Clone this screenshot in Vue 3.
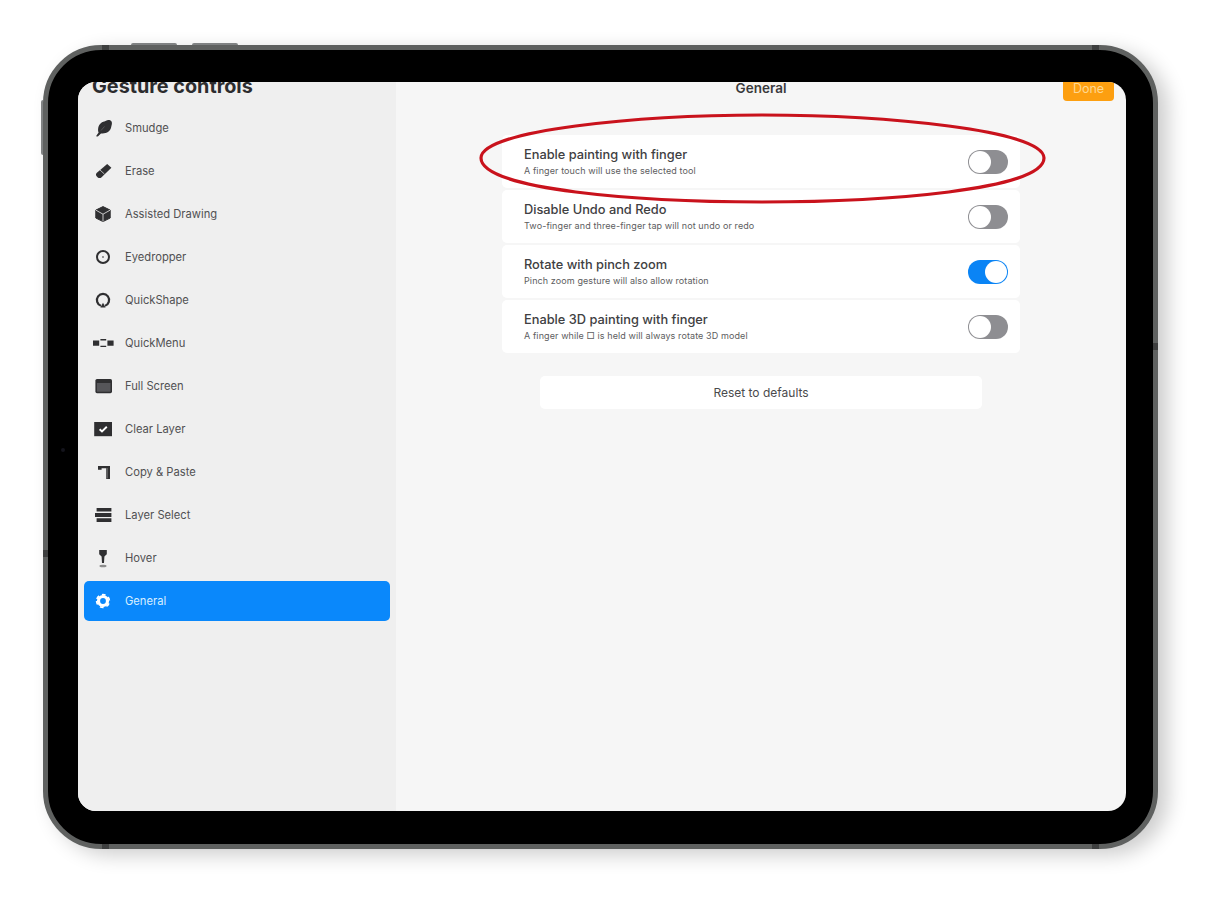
<script setup>
const ink = '#2f2f31'
const ring = (r) => `M${12 - r} 12a${r} ${r} 0 1 0 ${2 * r} 0a${r} ${r} 0 1 0 ${-2 * r} 0Z`

const menu = [
  { label: 'Smudge', shapes: [
    { d: 'M5 20.3 7.6 16.6C6.6 14 7 9.5 9.8 7.2 11.5 5.6 13 6 14.5 5 16.5 3.7 19 3.6 20.4 5.2 21.4 6.8 20.8 8.5 20.4 10 20 12 19.6 14 17.6 15.6 15 17.6 12 17.6 10 17.4L6.8 20.5Z', fill: ink },
    { d: 'M10 14.5 13.5 10.5', stroke: '#6c6c6e', 'stroke-width': 0.6, fill: 'none' }
  ] },
  { label: 'Erase', shapes: [
    { d: 'M16.2 5 20.4 8.7 10.6 18.2C9.4 19.3 7.9 19.4 6.8 18.4L5.6 17.2C4.6 16.1 4.8 14.8 5.9 13.8Z', fill: ink },
    { d: 'M9 11 13.4 15', stroke: '#efefef', 'stroke-width': 0.7, fill: 'none' }
  ] },
  { label: 'Assisted Drawing', shapes: [
    { d: 'M12 4.6 19.2 8.1V16L12 19.6 4.8 16V8.1Z', fill: ink, stroke: ink, 'stroke-linejoin': 'round' },
    { d: 'M12 12.2V19.6M12 12.2 4.8 8.1M12 12.2 19.2 8.1', stroke: '#efefef', 'stroke-width': 0.8, fill: 'none' }
  ] },
  { label: 'Eyedropper', shapes: [
    { d: ring(6), fill: 'none', stroke: ink, 'stroke-width': 2 },
    { d: ring(0.9), fill: '#6a6a6c' }
  ] },
  { label: 'QuickShape', shapes: [
    { d: 'M10 17.8A6.1 6.1 0 1 1 14 17.8', fill: 'none', stroke: ink, 'stroke-width': 2.2 },
    { d: 'M9.4 19.4 12 14.8 14.6 19.4Z', fill: ink }
  ] },
  { label: 'QuickMenu', shapes: [
    { d: 'M2 9.4H8.2V14.8H2ZM16.4 9.4H22.6V14.8H16.4Z', fill: ink },
    { d: 'M9.4 8.8H15.2M9.4 15.4H15.2', fill: 'none', stroke: ink, 'stroke-width': 1.4 }
  ] },
  { label: 'Full Screen', shapes: [
    { d: 'M6 5H19.4Q21 5 21 6.6V17.6Q21 19.2 19.4 19.2H6Q4.4 19.2 4.4 17.6V6.6Q4.4 5 6 5Z', fill: ink },
    { d: 'M5.9 9H19.5V17.7H5.9Z', fill: '#56565a' }
  ] },
  { label: 'Clear Layer', shapes: [
    { d: 'M3.2 5H21V19.2H3.2Z', fill: ink },
    { d: 'M8.6 12.2 11 14.5 15.8 9.8', fill: 'none', stroke: '#fff', 'stroke-width': 1.9 }
  ] },
  { label: 'Copy & Paste', shapes: [
    { d: 'M7 6H19V19H15.2V8.2H10.6V9.8H7Z', fill: ink },
    { d: 'M16.2 8V18.4', stroke: '#8a8a8a', 'stroke-width': 0.7, fill: 'none' }
  ] },
  { label: 'Layer Select', shapes: [
    { d: 'M5.6 5H20.4V8.6H5.6ZM4 10H20.4V14H4ZM5.6 15.2H20.4V19H5.6Z', fill: ink }
  ] },
  { label: 'Hover', shapes: [
    { d: 'M8.2 4H15.8V8.2L13.4 10.6 13 17H11L10.6 10.6 8.2 8.2Z', fill: ink },
    { d: 'M8.4 20a3.6 1.3 0 1 0 7.2 0a3.6 1.3 0 1 0-7.2 0Z', fill: '#8d8d8d' }
  ] },
  { label: 'General', active: true, shapes: [
    { d: ring(4.5), fill: 'none', stroke: '#fff', 'stroke-width': 3.2 },
    { d: ring(6.4), fill: 'none', stroke: '#fff', 'stroke-width': 1.6, 'stroke-dasharray': '3.7 3' }
  ] }
]

const settings = [
  { title: 'Enable painting with finger', text: 'A finger touch will use the selected tool', on: false },
  { title: 'Disable Undo and Redo', text: 'Two-finger and three-finger tap will not undo or redo', on: false },
  { title: 'Rotate with pinch zoom', text: 'Pinch zoom gesture will also allow rotation', on: true },
  { title: 'Enable 3D painting with finger', text: 'A finger while □ is held will always rotate 3D model', on: false }
]

const bands = ['b-t1', 'b-t2', 'b-b1', 'b-b2', 'b-l', 'b-r']
</script>

<template>
  <div class="page">
    <div class="device">
      <span class="btn btn-top1"></span>
      <span class="btn btn-top2"></span>
      <span class="btn btn-side"></span>
      <span v-for="b in bands" :key="b" class="band" :class="b"></span>
      <span class="camera"></span>

      <div class="screen">
        <aside class="sidebar">
          <h1 class="heading">Gesture controls</h1>
          <ul class="menu">
            <li v-for="item in menu" :key="item.label" class="menu-item" :class="{ active: item.active }">
              <svg class="icon" viewBox="0 0 24 24" width="24" height="24">
                <path v-for="(s, i) in item.shapes" :key="i" v-bind="s" />
              </svg>
              <span>{{ item.label }}</span>
            </li>
          </ul>
        </aside>

        <main class="panel">
          <header class="panel-head">
            <h2 class="panel-title">General</h2>
            <button class="done">Done</button>
          </header>
          <div class="rows">
            <div v-for="s in settings" :key="s.title" class="row">
              <div class="row-text">
                <div class="row-title">{{ s.title }}</div>
                <div class="row-sub">{{ s.text }}</div>
              </div>
              <span class="toggle" :class="{ on: s.on }"><span class="knob"></span></span>
            </div>
          </div>
          <button class="reset">Reset to defaults</button>
        </main>
      </div>
    </div>

    <svg class="marker" width="1215" height="900" viewBox="0 0 1215 900">
      <path
        d="M481 158C481 130 640 115 762 115C884 115 1044 130 1044 158C1044 190 884 202 762 202C640 202 481 190 481 158Z"
        fill="none"
        stroke="#c9121c"
        stroke-width="3.2"
      />
    </svg>
  </div>
</template>

<style scoped>
.page {
  position: relative;
  width: 1215px;
  height: 900px;
  padding: 45px 57px 51px 43px;
  box-sizing: border-box;
  overflow: hidden;
  background: #fff;
  font-family: Inter, "Liberation Sans", "DejaVu Sans", sans-serif;
}
.device {
  position: relative;
  height: 100%;
  box-sizing: border-box;
  padding: 32px 27px 33px 30px;
  border: 5px solid #5f6160;
  border-radius: 58px;
  background: #000;
  box-shadow: 10px 6px 20px rgba(0, 0, 0, 0.2);
}
.btn {
  position: absolute;
  background: #808283;
}
.btn-top1, .btn-top2 {
  top: -7px;
  width: 46px;
  height: 2px;
  border-radius: 2px 2px 0 0;
}
.btn-top1 { left: 83px; }
.btn-top2 { left: 144px; }
.btn-side {
  left: -7px;
  top: 50px;
  width: 2px;
  height: 55px;
  border-radius: 2px 0 0 2px;
}
.band {
  position: absolute;
  background: #3e3f3f;
}
.b-t1, .b-t2 { top: -5px; width: 7px; height: 5px; }
.b-b1, .b-b2 { bottom: -5px; width: 7px; height: 5px; }
.b-t1, .b-b1 { left: 54px; }
.b-t2, .b-b2 { left: 1044px; }
.b-l { left: -5px; top: 500px; width: 5px; height: 7px; }
.b-r { right: -5px; top: 293px; width: 5px; height: 7px; }
.camera {
  position: absolute;
  left: 13px;
  top: 398px;
  width: 4px;
  height: 4px;
  border-radius: 50%;
  background: #14141c;
}
.screen {
  display: flex;
  height: 100%;
  border-radius: 18px;
  overflow: hidden;
  background: #f6f6f6;
  color: #3d3d3f;
}
.sidebar {
  flex: 0 0 318px;
  box-sizing: border-box;
  padding: 0 6px;
  background: #efefef;
}
.heading {
  height: 25px;
  margin: -8px 0 9px 8px;
  font-size: 19.8px;
  line-height: 24px;
  font-weight: 700;
  color: #2c2c2e;
  white-space: nowrap;
}
.menu {
  display: flex;
  flex-direction: column;
  gap: 3px;
  margin: 0;
  padding: 0;
  list-style: none;
}
.menu-item {
  display: flex;
  align-items: center;
  gap: 10px;
  height: 40px;
  padding-left: 7px;
  border-radius: 5px;
  font-size: 11.2px;
  color: #515153;
}
.menu-item.active {
  background: #0a88fb;
  color: #d8eeff;
}
.icon {
  flex: none;
}
.panel {
  flex: 1;
  min-width: 0;
  display: flex;
  flex-direction: column;
  align-items: center;
}
.panel-head {
  position: relative;
  align-self: stretch;
  height: 53px;
}
.panel-title {
  margin: 0;
  font-size: 13.5px;
  line-height: 12px;
  font-weight: 600;
  text-align: center;
  color: #3a3a3c;
}
.done {
  position: absolute;
  top: -6px;
  right: 12px;
  width: 51px;
  height: 25px;
  padding: 0;
  border: 0;
  border-radius: 4px;
  background: #fd9f10;
  color: #ffd890;
  font: 12.5px Inter, "Liberation Sans", sans-serif;
}
.rows {
  display: flex;
  flex-direction: column;
  gap: 2px;
  width: 518px;
}
.row {
  display: flex;
  align-items: center;
  justify-content: space-between;
  height: 53px;
  box-sizing: border-box;
  padding: 0 12px 0 22px;
  border-radius: 5px;
  background: #fff;
}
.row-title {
  font-size: 12.8px;
  line-height: 16px;
  font-weight: 500;
  color: #404042;
}
.row-sub {
  margin-top: 2px;
  font-size: 9px;
  line-height: 12px;
  letter-spacing: 0.1px;
  color: #5d5d60;
}
.toggle {
  display: flex;
  width: 40px;
  height: 24px;
  box-sizing: border-box;
  padding: 1px;
  border-radius: 12px;
  background: #8e8e92;
}
.toggle.on {
  justify-content: flex-end;
  background: #0a84f5;
}
.knob {
  width: 22px;
  height: 22px;
  border-radius: 50%;
  background: #fff;
}
.reset {
  width: 442px;
  height: 33px;
  margin-top: 23px;
  padding: 0;
  border: 0;
  border-radius: 5px;
  background: #fff;
  color: #4a4a4c;
  font: 12px Inter, "Liberation Sans", sans-serif;
}
.marker {
  position: absolute;
  left: 0;
  top: 0;
  pointer-events: none;
}
</style>
